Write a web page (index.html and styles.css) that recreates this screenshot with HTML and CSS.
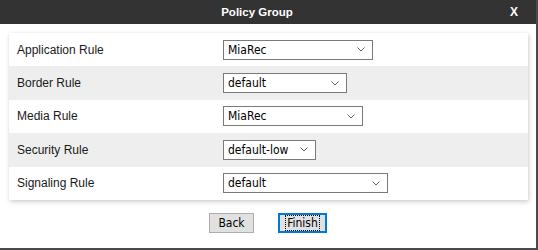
FILE: index.html
```html
<!DOCTYPE html>
<html>
<head>
<meta charset="utf-8">
<link rel="stylesheet" href="styles.css">
</head>
<body>
<div class="window">
  <div class="titlebar">
    <div class="title">Policy Group</div>
    <div class="close">X</div>
  </div>
  <div class="content">
    <div class="card">
      <div class="row">
        <div class="label">Application Rule</div>
        <div class="select w-app"><span>MiaRec</span><svg class="chev" width="8" height="5" viewBox="0 0 8 5"><polyline points="0.5,0.5 4,4 7.5,0.5" fill="none" stroke="#606060" stroke-width="1"/></svg></div>
      </div>
      <div class="row alt">
        <div class="label">Border Rule</div>
        <div class="select w-border"><span>default</span><svg class="chev" width="8" height="5" viewBox="0 0 8 5"><polyline points="0.5,0.5 4,4 7.5,0.5" fill="none" stroke="#606060" stroke-width="1"/></svg></div>
      </div>
      <div class="row">
        <div class="label">Media Rule</div>
        <div class="select w-media"><span>MiaRec</span><svg class="chev" width="8" height="5" viewBox="0 0 8 5"><polyline points="0.5,0.5 4,4 7.5,0.5" fill="none" stroke="#606060" stroke-width="1"/></svg></div>
      </div>
      <div class="row alt">
        <div class="label">Security Rule</div>
        <div class="select w-security"><span>default-low</span><svg class="chev" width="8" height="5" viewBox="0 0 8 5"><polyline points="0.5,0.5 4,4 7.5,0.5" fill="none" stroke="#606060" stroke-width="1"/></svg></div>
      </div>
      <div class="row">
        <div class="label">Signaling Rule</div>
        <div class="select w-signal"><span>default</span><svg class="chev" width="8" height="5" viewBox="0 0 8 5"><polyline points="0.5,0.5 4,4 7.5,0.5" fill="none" stroke="#606060" stroke-width="1"/></svg></div>
      </div>
    </div>
    <div class="buttons">
      <button class="btn back">Back</button>
      <button class="btn finish"><span class="focus">Finish</span></button>
    </div>
  </div>
</div>
</body>
</html>
```

FILE: styles.css
```css
html, body {
  margin: 0;
  padding: 0;
  background: #ffffff;
}

.window {
  width: 536px;
  height: 248px;
  border-right: 2px solid #4a4a4a;
  border-bottom: 2px solid #4a4a4a;
  background: #ffffff;
  display: flex;
  flex-direction: column;
}

.titlebar {
  height: 24px;
  background: #333333;
  color: #ffffff;
  display: flex;
  align-items: center;
  font-family: "Liberation Sans", Arial, sans-serif;
  font-weight: bold;
}

.title {
  flex: 1;
  text-align: center;
  font-size: 11.5px;
  padding-left: 4px;
}

.close {
  font-size: 12px;
  width: 26px;
  text-align: left;
}

.content {
  padding: 9px 8px 0 9px;
}

.card {
  background: #ffffff;
  box-shadow: 1px 2px 5px rgba(0, 0, 0, 0.18), 0 0 2px rgba(0, 0, 0, 0.06);
}

.row {
  height: 33.4px;
  display: flex;
  align-items: center;
  padding-left: 8px;
}

.row.alt {
  background: #eeeeee;
}

.label {
  width: 206px;
  font-family: "Liberation Sans", Arial, sans-serif;
  font-size: 12px;
  color: #1a1a1a;
}

.select {
  box-sizing: border-box;
  height: 20px;
  border: 1px solid #7a7a7a;
  background: #ffffff;
  display: flex;
  align-items: center;
  justify-content: space-between;
  padding: 0 7px 0 4px;
  font-family: "DejaVu Sans Condensed", "DejaVu Sans", sans-serif;
  font-stretch: condensed;
  font-size: 12px;
  color: #000000;
}

.chev {
  display: block;
  flex: none;
}

.w-app { width: 150px; }
.w-border { width: 124px; }
.w-media { width: 140px; }
.w-security { width: 93px; }
.w-signal { width: 165px; }

.buttons {
  display: flex;
  justify-content: center;
  gap: 24px;
  margin-top: 13px;
  padding-right: 1px;
}

.btn {
  box-sizing: border-box;
  height: 20px;
  margin: 0;
  padding: 0;
  background: #e1e1e1;
  border: 1px solid #adadad;
  font-family: "DejaVu Sans Condensed", "DejaVu Sans", sans-serif;
  font-stretch: condensed;
  font-size: 12px;
  color: #000000;
  display: flex;
  align-items: center;
  justify-content: center;
}

.back {
  width: 45px;
}

.finish {
  width: 49px;
  border: 2px solid #0078d7;
}

.focus {
  border: 1px dotted #000000;
  padding: 0 1px;
  line-height: 14px;
}
```
